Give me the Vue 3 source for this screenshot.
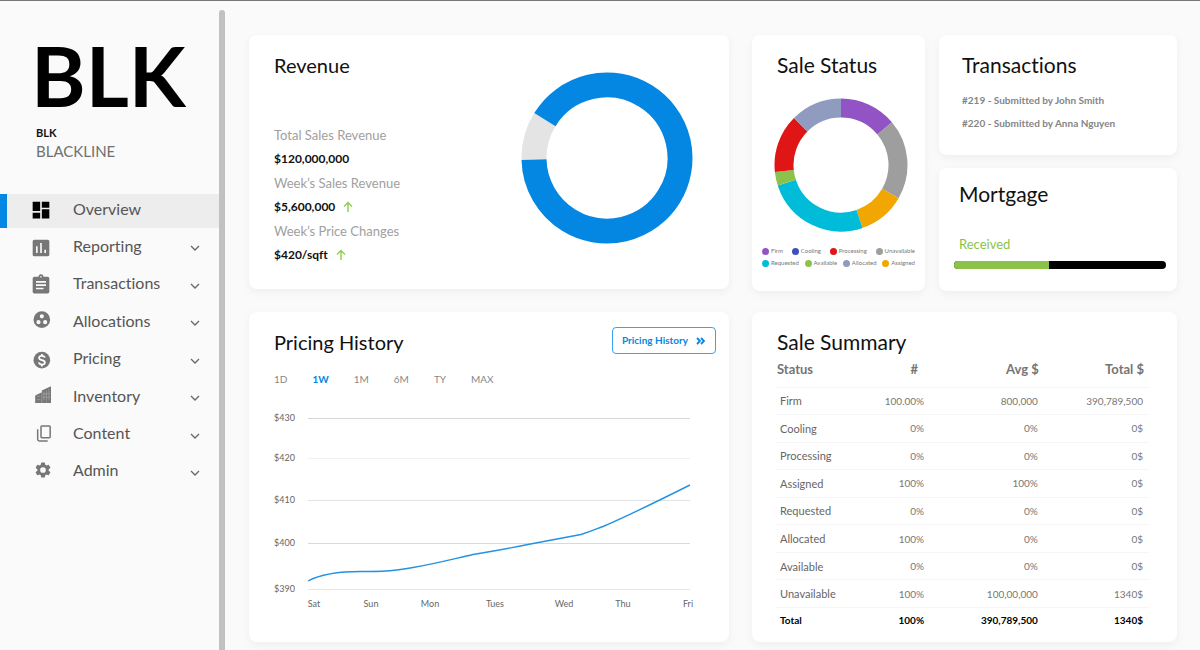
<script setup>
const nav = [
  { label: 'Overview', icon: 'dashboard', active: true },
  { label: 'Reporting', icon: 'report' },
  { label: 'Transactions', icon: 'clipboard' },
  { label: 'Allocations', icon: 'group' },
  { label: 'Pricing', icon: 'dollar' },
  { label: 'Inventory', icon: 'building' },
  { label: 'Content', icon: 'copy' },
  { label: 'Admin', icon: 'gear' },
]

const revenue = [
  { label: 'Total Sales Revenue', value: '$120,000,000', up: false },
  { label: 'Week’s Sales Revenue', value: '$5,600,000', up: true },
  { label: 'Week’s Price Changes', value: '$420/sqft', up: true },
]

const statusSegments = [
  { color: '#9254c4', from: 0, to: 50 },
  { color: '#9e9e9e', from: 50, to: 120 },
  { color: '#f2a602', from: 120, to: 161 },
  { color: '#01bcd8', from: 161, to: 252 },
  { color: '#8bc34a', from: 252, to: 264 },
  { color: '#e01616', from: 264, to: 315 },
  { color: '#8f9cc0', from: 315, to: 360 },
]

const legend = [
  [
    { label: 'Firm', color: '#9254c4' },
    { label: 'Cooling', color: '#4150b8' },
    { label: 'Processing', color: '#e01616' },
    { label: 'Unavailable', color: '#9e9e9e' },
  ],
  [
    { label: 'Requested', color: '#01bcd8' },
    { label: 'Available', color: '#8bc34a' },
    { label: 'Allocated', color: '#8f9cc0' },
    { label: 'Assigned', color: '#f2a602' },
  ],
]

const ranges = ['1D', '1W', '1M', '6M', 'TY', 'MAX']

const priceTicks = [
  { label: '$430', y: 18, color: '#d6d8d8' },
  { label: '$420', y: 58, color: '#f0f0f0' },
  { label: '$410', y: 100, color: '#e2e2e2' },
  { label: '$400', y: 143, color: '#d9d9d9' },
  { label: '$390', y: 189, color: '#e6e6e6' },
]

const days = [
  { label: 'Sat', x: 40 },
  { label: 'Sun', x: 97 },
  { label: 'Mon', x: 156 },
  { label: 'Tues', x: 221 },
  { label: 'Wed', x: 290 },
  { label: 'Thu', x: 349 },
  { label: 'Fri', x: 414 },
]

const rows = [
  ['Firm', '100.00%', '800,000', '390,789,500'],
  ['Cooling', '0%', '0%', '0$'],
  ['Processing', '0%', '0%', '0$'],
  ['Assigned', '100%', '100%', '0$'],
  ['Requested', '0%', '0%', '0$'],
  ['Allocated', '100%', '0%', '0$'],
  ['Available', '0%', '0%', '0$'],
  ['Unavailable', '100%', '100,00,000', '1340$'],
  ['Total', '100%', '390,789,500', '1340$'],
]

const received = 45
</script>

<template>
  <div class="app">
    <aside class="sidebar">
      <div class="logo">BLK</div>
      <div class="code">BLK</div>
      <div class="company">BLACKLINE</div>
      <nav class="nav">
        <a v-for="item in nav" :key="item.label" href="#" class="nav-item" :class="{ active: item.active }">
          <svg class="nav-icon" viewBox="0 0 24 24" width="20" height="20" aria-hidden="true">
            <path v-if="item.icon === 'dashboard'" d="M2 1h9v11H2zM13 1h9v7h-9zM2 14h9v7H2zM13 10h9v11h-9z" />
            <path v-else-if="item.icon === 'report'" fill-rule="evenodd" d="M4 2h16a2 2 0 0 1 2 2v16a2 2 0 0 1-2 2H4a2 2 0 0 1-2-2V4a2 2 0 0 1 2-2zM6 10v8h2v-8zM11 6v12h2V6zM16 14v4h2v-4z" />
            <path v-else-if="item.icon === 'clipboard'" transform="translate(0 -1)" fill-rule="evenodd" d="M20 2h-5a3 3 0 0 0-6 0H4a2 2 0 0 0-2 2v16a2 2 0 0 0 2 2h16a2 2 0 0 0 2-2V4a2 2 0 0 0-2-2zM12 1a1 1 0 1 1 0 2 1 1 0 0 1 0-2zM6 7h12v2H6zM6 11h12v2H6zM6 15h9v2H6z" />
            <path v-else-if="item.icon === 'group'" transform="translate(1 -4)" fill-rule="evenodd" d="M12 2a10 10 0 1 0 0 20 10 10 0 0 0 0-20zM8 17.500a2.500 2.500 0 1 1 0-5 2.500 2.500 0 0 1 0 5zM9.500 8a2.500 2.500 0 1 1 5 0 2.500 2.500 0 0 1-5 0zM16 17.500a2.500 2.500 0 1 1 0-5 2.500 2.500 0 0 1 0 5z" />
            <g v-else-if="item.icon === 'dollar'" transform="translate(1 -1)">
              <circle cx="12" cy="12" r="10" />
              <path fill="none" stroke="#fff" stroke-width="2" d="M15.500 9C15.300 7.400 14 6.800 12.100 6.800c-2 0-3.400.9-3.400 2.500 0 3.700 7 1.700 7 5.400 0 1.600-1.500 2.500-3.600 2.500-2.100 0-3.500-.8-3.700-2.500M12.100 4.500v2.500M12.100 17v2.500" />
            </g>
            <g v-else-if="item.icon === 'building'" transform="translate(1 -4)">
              <path d="M4 13l8-4v13H4zM12 7l11-5v20H12z" />
              <path fill="none" stroke="#d0d0d0" stroke-width="1" d="M6 14h4M6 18h4M12 8v14M14.500 8v11M17.500 7v12M20.500 5v14M13 11h9M13 15h9M17.500 20v2" opacity=".4" />
            </g>
            <g v-else-if="item.icon === 'copy'" transform="translate(2 -3)" fill="none" stroke="#777" stroke-width="1.800">
              <rect x="10" y="3" width="11" height="14" rx="1" />
              <path d="M6 7v12a2 2 0 0 0 2 2h10" />
            </g>
            <path v-else transform="translate(3 -3) scale(.95)" fill-rule="evenodd" d="M19.140 12.940a7 7 0 0 0 0-1.880l2.030-1.580a.5.5 0 0 0 .12-.61l-1.920-3.320a.5.5 0 0 0-.59-.22l-2.390.96a7 7 0 0 0-1.620-.94l-.36-2.540A.5.5 0 0 0 13.930 2.400h-3.840a.5.5 0 0 0-.47.41l-.36 2.540a7 7 0 0 0-1.620.94l-2.390-.96a.5.5 0 0 0-.59.22L2.740 8.870a.5.5 0 0 0 .12.610l2.030 1.580a7 7 0 0 0 0 1.880l-2.030 1.580a.5.5 0 0 0-.12.610l1.920 3.320c.12.220.37.290.59.220l2.390-.96c.5.380 1.030.7 1.620.94l.36 2.540c.5.240.24.410.48.410h3.840c.24 0 .44-.17.470-.41l.36-2.540a7 7 0 0 0 1.620-.94l2.390.96c.22.080.47 0 .59-.22l1.920-3.320a.5.5 0 0 0-.12-.61zM12 15.600a3.600 3.600 0 1 1 0-7.200 3.600 3.600 0 0 1 0 7.200z" />
          </svg>
          <span class="nav-label">{{ item.label }}</span>
          <svg v-if="!item.active" class="chevron" viewBox="0 0 10 6" width="10" height="6" aria-hidden="true">
            <path d="M1 1l4 4 4-4" fill="none" stroke="#666" stroke-width="1.300" />
          </svg>
        </a>
      </nav>
    </aside>
    <div class="scrollbar"></div>

    <main class="main">
      <section class="card revenue">
        <div>
          <h2>Revenue</h2>
          <dl>
            <template v-for="r in revenue" :key="r.label">
              <dt>{{ r.label }}</dt>
              <dd>
                {{ r.value }}
                <svg v-if="r.up" viewBox="0 0 10 12" width="10" height="12" aria-label="up">
                  <path d="M5 11V2M1 5.500l4-4 4 4" fill="none" stroke="#8bcf4a" stroke-width="1.400" />
                </svg>
              </dd>
            </template>
          </dl>
        </div>
        <svg class="donut" viewBox="0 0 172 172" width="172" height="172" aria-label="Revenue share">
          <circle cx="86" cy="86" r="73" fill="none" stroke="#e4e4e4" stroke-width="25" pathLength="360" stroke-dasharray="33 327" transform="rotate(178.700 86 86)" />
          <circle cx="86" cy="86" r="73" fill="none" stroke="#0486e3" stroke-width="25" pathLength="360" stroke-dasharray="327 33" transform="rotate(211.700 86 86)" />
        </svg>
      </section>

      <div class="top-right">
        <section class="card status">
          <h2>Sale Status</h2>
          <svg class="status-donut" viewBox="0 0 134 134" width="134" height="134" aria-label="Sale status share">
            <circle
              v-for="s in statusSegments"
              :key="s.color"
              cx="67" cy="67" r="57" fill="none" stroke-width="19" pathLength="360"
              :stroke="s.color"
              :stroke-dasharray="`${s.to - s.from} ${360 - s.to + s.from}`"
              :transform="`rotate(${s.from - 90} 67 67)`"
            />
          </svg>
          <div class="legend">
            <div v-for="(line, i) in legend" :key="i" class="legend-row">
              <span v-for="l in line" :key="l.label" class="legend-item">
                <i class="dot" :style="{ background: l.color }"></i>{{ l.label }}
              </span>
            </div>
          </div>
        </section>

        <div class="side">
          <section class="card transactions">
            <h2>Transactions</h2>
            <p>#219 - Submitted by John Smith</p>
            <p>#220 - Submitted by Anna Nguyen</p>
          </section>
          <section class="card mortgage">
            <h2>Mortgage</h2>
            <div class="received">Received</div>
            <div class="bar" role="progressbar" aria-label="Received" :aria-valuenow="received">
              <div class="fill" :style="{ width: received + '%' }"></div>
            </div>
          </section>
        </div>
      </div>

      <section class="card pricing">
        <header class="pricing-head">
          <h2>Pricing History</h2>
          <button class="outline" type="button">
            Pricing History
            <svg viewBox="0 0 10 8" width="10" height="8" aria-hidden="true">
              <path d="M1 1l3 3-3 3M5 1l3 3-3 3" fill="none" stroke="#0486e3" stroke-width="1.800" />
            </svg>
          </button>
        </header>
        <div class="ranges">
          <button v-for="r in ranges" :key="r" type="button" :class="{ on: r === '1W' }">{{ r }}</button>
        </div>
        <svg class="chart" viewBox="0 0 442 212" aria-label="Pricing history chart">
          <g v-for="t in priceTicks" :key="t.label">
            <text x="0" :y="t.y + 3">{{ t.label }}</text>
            <rect x="34" :y="t.y" width="382" height="1" :fill="t.color" />
          </g>
          <path
            d="M34 181C45 175 65 171.500 87 171.500c20 0 30 0 52-4 23-4 42-9 60-13 20-3 40-7 60-11l48-9c10-3 14-5 22-8C354 116 384 101 416 85"
            fill="none" stroke="#2492e3" stroke-width="1.400"
          />
          <text v-for="d in days" :key="d.label" :x="d.x" y="207" text-anchor="middle">{{ d.label }}</text>
        </svg>
      </section>

      <section class="card summary">
        <h2>Sale Summary</h2>
        <table>
          <thead>
            <tr><th>Status</th><th class="count">#</th><th>Avg $</th><th>Total $</th></tr>
          </thead>
          <tbody>
            <tr v-for="row in rows" :key="row[0]" :class="{ total: row[0] === 'Total' }">
              <td v-for="(cell, i) in row" :key="i">{{ cell }}</td>
            </tr>
          </tbody>
        </table>
      </section>
    </main>
  </div>
</template>

<style>
body {
  background: #fafafa;
}
</style>

<style scoped>
.app {
  box-sizing: border-box;
  display: flex;
  min-height: 100vh;
  border-top: 1px solid #777;
  font-family: Lato, "Liberation Sans", sans-serif;
  font-variant-ligatures: none;
  color: #111;
}
h2, p, dl, dd {
  margin: 0;
}
h2 {
  font-size: 20px;
  font-weight: 400;
  line-height: 24px;
}
button {
  font-family: inherit;
  background: none;
  cursor: pointer;
}

.sidebar {
  flex: 0 0 219px;
  padding-top: 32px;
  box-sizing: border-box;
}
.logo {
  padding-left: 31px;
  font-size: 83px;
  font-weight: 700;
  line-height: 84px;
  color: #000;
}
.code {
  padding: 8px 0 0 36px;
  font-size: 11px;
  font-weight: 700;
  line-height: 16px;
}
.company {
  padding-left: 36px;
  font-size: 15px;
  line-height: 20px;
  color: #707070;
}
.nav {
  display: flex;
  flex-direction: column;
  justify-content: space-between;
  min-height: 296px;
  margin-top: 33px;
}
.nav-item {
  display: flex;
  align-items: center;
  height: 34px;
  padding: 0 19px 0 31px;
  color: #555;
  fill: #777;
  text-decoration: none;
}
.nav-item.active {
  padding-left: 24px;
  border-left: 7px solid #0486e3;
  background: #ededed;
  fill: #000;
}
.nav-icon {
  overflow: visible;
}
.nav-label {
  flex: 1;
  padding: 0 0 5px 22px;
  font-size: 16px;
  line-height: 20px;
}
.scrollbar {
  flex: 0 0 6px;
  margin-top: 9px;
  border-radius: 3px 3px 0 0;
  background: #c1c1c1;
}

.main {
  flex: 1;
  display: grid;
  grid-template-columns: 480fr 425fr;
  align-content: start;
  gap: 21px 23px;
  padding: 34px 23px 7px 24px;
}
.card {
  box-sizing: border-box;
  border-radius: 8px;
  background: #fff;
  box-shadow: 0 3px 10px rgba(0, 0, 0, 0.05);
}
.revenue {
  display: flex;
  justify-content: space-between;
  align-items: flex-start;
  margin-bottom: 2px;
  padding: 18px 36px 22px 25px;
}
.revenue dl {
  margin-top: 46px;
  font-size: 13px;
  line-height: 24px;
}
.revenue dt {
  color: #a0a0a0;
}
.revenue dd {
  display: flex;
  align-items: center;
  gap: 8px;
  font-size: 12px;
  font-weight: 700;
  color: #111;
}
.donut {
  margin-top: 19px;
}

.top-right {
  display: grid;
  grid-template-columns: 173fr 238fr;
  gap: 14px;
}
.top-right h2, .summary h2 {
  font-size: 21px;
}
.status {
  display: flex;
  flex-direction: column;
  align-items: center;
  padding: 18px 10px 23px;
}
.status h2 {
  align-self: stretch;
  padding-left: 15px;
}
.status-donut {
  margin: 21px 0 0 5px;
}
.legend {
  align-self: stretch;
  display: flex;
  flex-direction: column;
  gap: 4px;
  margin-top: 15px;
}
.legend-row {
  display: flex;
  justify-content: space-between;
}
.legend-item {
  display: flex;
  align-items: center;
  gap: 2px;
  font-size: 6px;
  line-height: 8px;
  color: #777;
}
.dot {
  width: 7px;
  height: 7px;
  border-radius: 50%;
}
.side {
  display: flex;
  flex-direction: column;
  gap: 13px;
}
.transactions {
  padding: 18px 23px 20px;
}
.transactions h2 {
  margin-bottom: 12px;
}
.transactions p {
  font-size: 10px;
  font-weight: 700;
  line-height: 23px;
  color: #858585;
}
.mortgage {
  flex: 1;
  padding: 14px 11px 20px 15px;
}
.mortgage h2 {
  padding-left: 5px;
}
.received {
  margin: 28px 0 7px;
  padding-left: 5px;
  font-size: 13px;
  line-height: 20px;
  color: #8bc34a;
}
.bar {
  height: 8px;
  border-radius: 4px;
  background: #000;
  overflow: hidden;
}
.fill {
  height: 100%;
  background: #8bc34a;
}

.pricing {
  padding: 15px 13px 30px 25px;
}
.pricing-head {
  display: flex;
  justify-content: space-between;
  align-items: flex-start;
}
.pricing-head h2 {
  padding-top: 3px;
}
.outline {
  display: flex;
  align-items: center;
  gap: 8px;
  padding: 0 9px;
  border: 1px solid #3ba2ee;
  border-radius: 4px;
  font-size: 10px;
  font-weight: 700;
  line-height: 25px;
  color: #0486e3;
}
.ranges {
  display: flex;
  gap: 25px;
  margin-top: 17px;
}
.ranges button {
  padding: 0;
  border: 0;
  font-size: 10px;
  line-height: 16px;
  color: #888;
}
.ranges .on {
  font-weight: 700;
  color: #0486e3;
}
.chart {
  display: block;
  width: 100%;
  margin-top: 13px;
}
.chart text {
  font-size: 9px;
  fill: #666;
}

.summary {
  padding: 18px 28px 10px 23px;
}
.summary h2 {
  padding-left: 2px;
}
table {
  width: 100%;
  height: 278px;
  border-collapse: collapse;
  table-layout: fixed;
  font-size: 10px;
  color: #777;
}
th, td {
  padding: 0 6px 0 5px;
  text-align: right;
}
th {
  height: 33px;
  padding: 0 5px 2px 2px;
  box-sizing: border-box;
  font-size: 13px;
  font-weight: 700;
  color: #757575;
}
th:first-child, td:first-child {
  text-align: left;
}
th:first-child {
  width: 74px;
}
th:nth-child(2) {
  width: 72px;
}
th:nth-child(3) {
  width: 107px;
}
th:nth-child(4) {
  width: 99px;
}
.count {
  padding-right: 12px;
}
td {
  border-top: 1px solid #f5f5f5;
}
td:first-child {
  font-size: 11px;
  color: #666;
}
.total td, .total td:first-child {
  font-size: 10px;
  font-weight: 700;
  color: #000;
}
</style>
